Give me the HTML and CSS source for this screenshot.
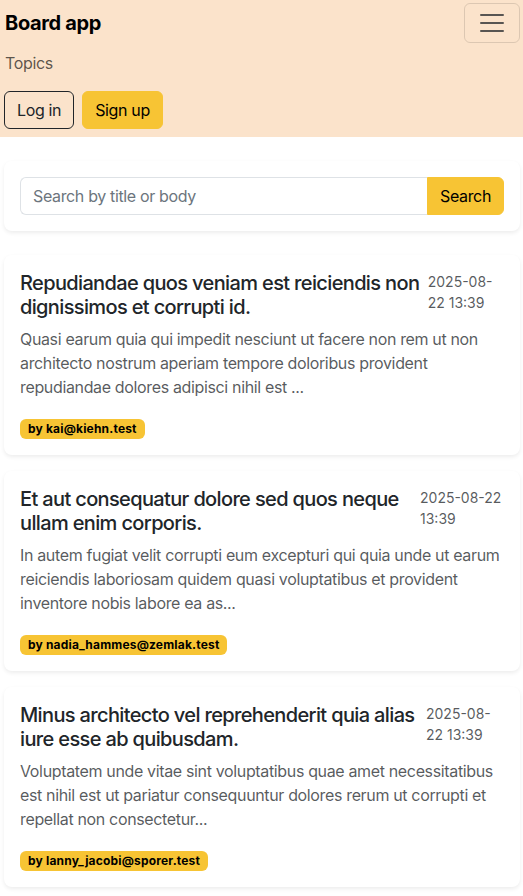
FILE: index.html
```html
<!DOCTYPE html>
<html>
    <head>
        <meta charset="utf-8" />
        <meta name="viewport" content="width=device-width, initial-scale=1">
        <title>Board app</title>
        <link rel="stylesheet" href="styles.css">
    </head>
    <body>
        <nav class="navbar">
            <div class="navbar-top">
                <a class="brand" href="#">Board app</a>
                <button class="toggler" type="button" aria-label="Toggle navigation">
                    <svg width="30" height="30" viewBox="0 0 30 30">
                        <path d="M4 7h22M4 15h22M4 23h22" stroke="rgba(33,37,41,0.75)" stroke-width="2" stroke-linecap="round" stroke-miterlimit="10"/>
                    </svg>
                </button>
            </div>
            <a class="nav-link" href="#">Topics</a>
            <div class="nav-actions">
                <a class="btn btn-outline" href="#">Log in</a>
                <a class="btn btn-warning" href="#">Sign up</a>
            </div>
        </nav>

        <main class="container">
            <form class="card search-card">
                <div class="input-group">
                    <input class="search-input" type="text" placeholder="Search by title or body">
                    <button class="btn btn-warning search-btn" type="submit">Search</button>
                </div>
            </form>

            <article class="card topic">
                <div class="topic-head">
                    <h5 class="topic-title">Repudiandae quos veniam est reiciendis non dignissimos et corrupti id.</h5>
                    <small class="topic-date">2025-08-22 13:39</small>
                </div>
                <p class="topic-body">Quasi earum quia qui impedit nesciunt ut facere non rem ut non architecto nostrum aperiam tempore doloribus provident repudiandae dolores adipisci nihil est ...</p>
                <div><span class="badge">by kai@kiehn.test</span></div>
            </article>

            <article class="card topic">
                <div class="topic-head">
                    <h5 class="topic-title">Et aut consequatur dolore sed quos neque ullam enim corporis.</h5>
                    <small class="topic-date">2025-08-22 13:39</small>
                </div>
                <p class="topic-body">In autem fugiat velit corrupti eum excepturi qui quia unde ut earum reiciendis laboriosam quidem quasi voluptatibus et provident inventore nobis labore ea as...</p>
                <div><span class="badge">by nadia_hammes@zemlak.test</span></div>
            </article>

            <article class="card topic">
                <div class="topic-head">
                    <h5 class="topic-title">Minus architecto vel reprehenderit quia alias iure esse ab quibusdam.</h5>
                    <small class="topic-date">2025-08-22 13:39</small>
                </div>
                <p class="topic-body">Voluptatem unde vitae sint voluptatibus quae amet necessitatibus est nihil est ut pariatur consequuntur dolores rerum ut corrupti et repellat non consectetur...</p>
                <div><span class="badge">by lanny_jacobi@sporer.test</span></div>
            </article>
        </main>
    </body>
</html>
```

FILE: styles.css
```css
* {
    box-sizing: border-box;
}

body {
    margin: 0;
    font-family: Inter, "Noto Sans", "Liberation Sans", sans-serif;
    font-size: 16px;
    line-height: 1.5;
    letter-spacing: -0.022em;
    color: #212529;
    background-color: #ffffff;
}

a {
    text-decoration: none;
}

/* navbar */

.navbar {
    background-color: #fbe3cb;
    padding: 3px 3px 8px 4px;
}

.navbar-top {
    display: flex;
    align-items: center;
    justify-content: space-between;
}

.brand {
    font-size: 20px;
    font-weight: 700;
    line-height: 30px;
    color: #000000;
    padding-left: 1px;
}

.toggler {
    width: 56px;
    height: 40px;
    padding: 0;
    display: flex;
    align-items: center;
    justify-content: center;
    background: transparent;
    border: 1px solid rgba(0, 0, 0, 0.12);
    border-radius: 6px;
}

.nav-link {
    display: block;
    padding: 8px 0 8px 1px;
    color: rgba(0, 0, 0, 0.65);
}

.nav-actions {
    display: flex;
    gap: 8px;
    margin-top: 8px;
}

/* buttons */

.btn {
    display: inline-block;
    padding: 6px 12px;
    font-family: inherit;
    font-size: 16px;
    line-height: 24px;
    letter-spacing: inherit;
    color: #212529;
    border: 1px solid transparent;
    border-radius: 6px;
    cursor: pointer;
}

.btn-outline {
    border-color: #212529;
}

.btn-warning {
    background-color: #f7c434;
    border-color: #f7c434;
    color: #000000;
}

/* content */

.container {
    padding: 24px 3px 8px 4px;
}

.card {
    display: block;
    margin: 0;
    padding: 16px;
    background-color: #ffffff;
    border-radius: 8px;
    box-shadow: 0 2px 4px rgba(0, 0, 0, 0.075);
}

.search-card {
    margin-bottom: 24px;
}

.input-group {
    display: flex;
}

.search-input {
    flex: 1;
    min-width: 0;
    height: 38px;
    padding: 6px 12px;
    font-family: inherit;
    font-size: 16px;
    letter-spacing: inherit;
    color: #212529;
    border: 1px solid #dee2e6;
    border-right: none;
    border-radius: 6px 0 0 6px;
    outline: none;
}

.search-input::placeholder {
    color: #6c757d;
}

.search-btn {
    border-radius: 0 6px 6px 0;
    padding: 6px 12px;
}

.topic {
    margin-bottom: 16px;
}

.topic-head {
    display: flex;
    justify-content: space-between;
}

.topic-title {
    margin: 0 0 8px 0;
    font-size: 20px;
    font-weight: 500;
    line-height: 1.2;
    letter-spacing: -0.032em;
}

.topic-date {
    margin-left: 8px;
    font-size: 14px;
    line-height: 21px;
    letter-spacing: 0;
    color: rgba(33, 37, 41, 0.75);
}

.topic-body {
    margin: 0 0 16px 0;
    color: rgba(33, 37, 41, 0.75);
}

.badge {
    display: inline-block;
    padding: 4px 8px;
    font-size: 12px;
    font-weight: 700;
    line-height: 1;
    letter-spacing: 0.015em;
    color: #000000;
    background-color: #f7c434;
    border-radius: 6px;
}
```
